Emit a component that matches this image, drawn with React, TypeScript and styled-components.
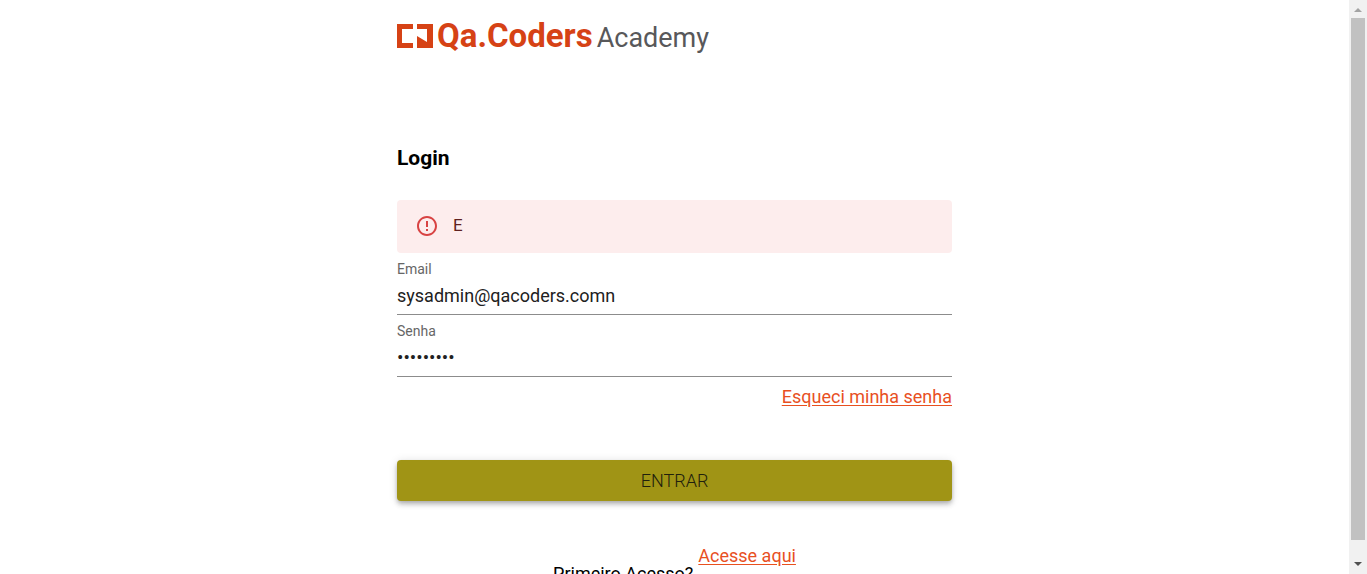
import React, { useState } from "react";
import styled, { createGlobalStyle } from "styled-components";

const GlobalStyle = createGlobalStyle`
  * { box-sizing: border-box; }
  body {
    margin: 0;
    overflow: hidden;
    background: #fff;
    color: #000;
    font-family: Roboto, "Liberation Sans", sans-serif;
  }
`;

const Page = styled.div`
  display: grid;
  grid-template-columns: minmax(0, 1fr) 18px;
  height: 100vh;
`;

const Content = styled.main`
  overflow: hidden;
  padding: 17px 16px;
`;

const Column = styled.form`
  display: flex;
  flex-direction: column;
  width: 100%;
  max-width: 555px;
  margin: 0 auto;
`;

const Logo = styled.header`
  display: flex;
  align-items: baseline;
  height: 40px;
  line-height: 38px;
  white-space: nowrap;
`;

const LogoMark = styled.svg`
  align-self: flex-start;
  width: 36px;
  height: 24px;
  margin: 7px 4px 0 0;
`;

const Brand = styled.span`
  color: #d64215;
  font-size: 33px;
  font-weight: 700;
`;

const BrandSuffix = styled.span`
  margin-left: 4px;
  color: #58585a;
  font-size: 27px;
  font-weight: 400;
`;

const Title = styled.h1`
  margin: 87px 0 28px;
  font-size: 21px;
  line-height: 28px;
  font-weight: 700;
`;

const Alert = styled.div`
  display: flex;
  align-items: flex-start;
  gap: 14px;
  height: 53px;
  padding: 14px 18px;
  border-radius: 4px;
  background: #fdeded;
  color: #5f2120;
  font-size: 17px;
  line-height: 22px;
`;

const AlertIcon = styled.svg`
  width: 24px;
  height: 24px;
  fill: #d84343;
`;

const Field = styled.div`
  display: flex;
  flex-direction: column;
  height: 62px;
  padding-top: 8px;
  border-bottom: 1px solid #8c8c8c;
`;

const Label = styled.label`
  color: #666;
  font-size: 14px;
  line-height: 17px;
`;

const Input = styled.input`
  width: 100%;
  height: 34px;
  padding: 0;
  border: 0;
  outline: 0;
  background: transparent;
  color: #212121;
  font-family: inherit;
  font-size: ${(p) => (p.type === "password" ? "19px" : "18px")};
`;

const Link = styled.a`
  color: #e8501f;
  font-size: 18px;
  line-height: 24px;
  text-underline-offset: 2px;
`;

const Recovery = styled.div`
  display: flex;
  justify-content: flex-end;
  padding-top: 8px;
`;

const SubmitButton = styled.button`
  height: 41px;
  margin-top: 51px;
  padding: 0 16px 1px;
  border: 0;
  border-radius: 4px;
  background: #a09415;
  box-shadow: 0 2px 4px -1px rgba(0, 0, 0, 0.2), 0 4px 5px rgba(0, 0, 0, 0.14),
    0 1px 10px rgba(0, 0, 0, 0.12);
  color: #20200d;
  font-family: inherit;
  font-size: 18px;
  font-weight: 300;
  text-transform: uppercase;
  cursor: pointer;
`;

const FirstAccess = styled.div`
  display: flex;
  justify-content: center;
  gap: 5px;
  margin-top: 43px;
`;

const Question = styled.p`
  margin: 18px 0 0;
  font-size: 18px;
  line-height: 24px;
`;

const Scrollbar = styled.div`
  display: grid;
  grid-template-rows: 18px minmax(0, 1fr) 18px;
  justify-items: center;
  background: #f1f1f1;
`;

const Track = styled.div`
  width: 14px;
`;

const Thumb = styled.div`
  height: 97%;
  background: #c1c1c1;
`;

const Arrow = styled.svg`
  width: 18px;
  height: 18px;
`;

export default function App() {
  const [email, setEmail] = useState("sysadmin@qacoders.comn");
  const [password, setPassword] = useState("123456789");

  return (
    <>
      <GlobalStyle />
      <Page>
        <Content>
          <Column onSubmit={(e: React.FormEvent) => e.preventDefault()}>
            <Logo>
              <LogoMark viewBox="0 0 36 24" fill="#d64215" aria-hidden="true">
                <path d="M0 0H16V5H5V19H16V24H0ZM20 0H36V24H20V12L30 18V5H20Z" />
              </LogoMark>
              <Brand>Qa.Coders</Brand>
              <BrandSuffix>Academy</BrandSuffix>
            </Logo>
            <Title>Login</Title>
            <Alert role="alert">
              <AlertIcon viewBox="0 0 24 24" aria-hidden="true">
                <path d="M11 15h2v2h-2zm0-8h2v6h-2zm.99-5C6.47 2 2 6.48 2 12s4.47 10 9.99 10C17.52 22 22 17.52 22 12S17.52 2 11.99 2zM12 20c-4.42 0-8-3.58-8-8s3.58-8 8-8 8 3.58 8 8-3.58 8-8 8z" />
              </AlertIcon>
              <span>E</span>
            </Alert>
            <Field>
              <Label htmlFor="email">Email</Label>
              <Input id="email" type="email" value={email} onChange={(e) => setEmail(e.target.value)} />
            </Field>
            <Field>
              <Label htmlFor="password">Senha</Label>
              <Input id="password" type="password" value={password} onChange={(e) => setPassword(e.target.value)} />
            </Field>
            <Recovery>
              <Link href="#recuperar">Esqueci minha senha</Link>
            </Recovery>
            <SubmitButton type="submit">Entrar</SubmitButton>
            <FirstAccess>
              <Question>Primeiro Acesso?</Question>
              <Link href="#acesso">Acesse aqui</Link>
            </FirstAccess>
          </Column>
        </Content>
        <Scrollbar aria-hidden="true">
          <Arrow viewBox="0 0 18 18" fill="#a3a3a3">
            <path d="M5 12L9 8L13 12Z" />
          </Arrow>
          <Track>
            <Thumb />
          </Track>
          <Arrow viewBox="0 0 18 18" fill="#505050">
            <path d="M5 6L9 10L13 6Z" />
          </Arrow>
        </Scrollbar>
      </Page>
    </>
  );
}
